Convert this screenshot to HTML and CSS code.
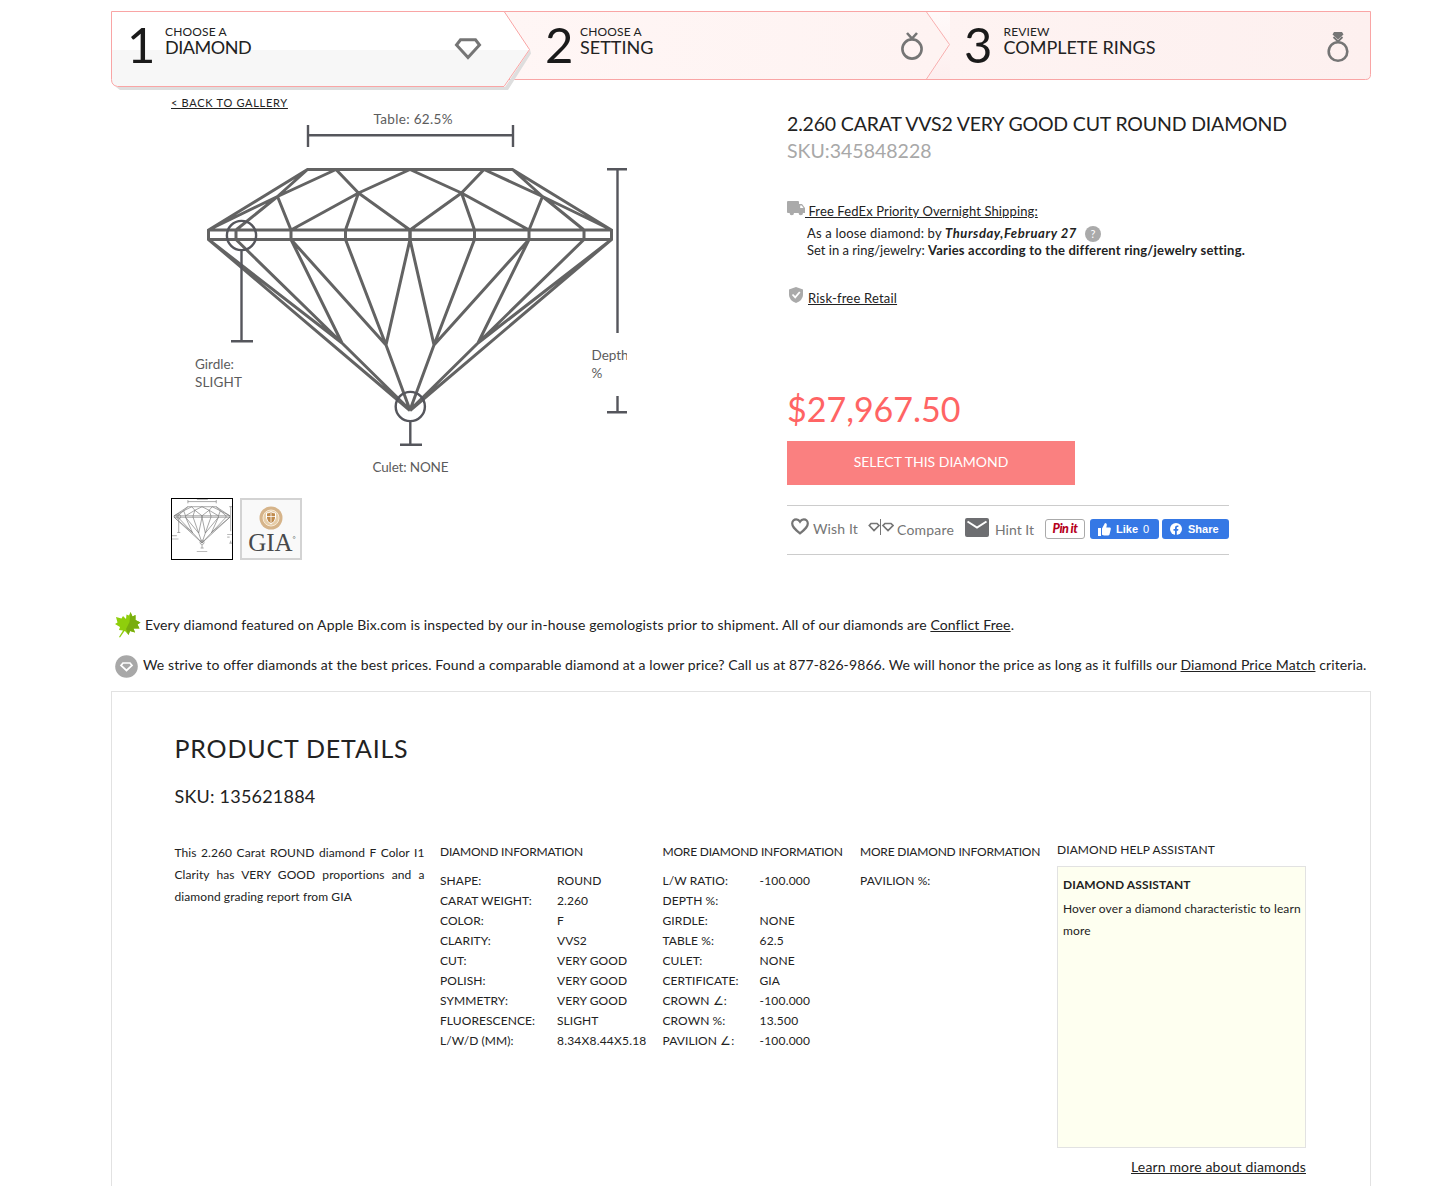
FILE: index.html
```html
<!DOCTYPE html>
<html lang="en">
<head>
<meta charset="utf-8">
<title>2.260 Carat VVS2 Very Good Cut Round Diamond</title>
<link rel="stylesheet" href="styles.css">
</head>
<body>
<div class="page">
  <nav class="steps">
    <svg class="steps-bg" viewBox="0 0 1260 80" width="1260" height="80">
      <defs>
        <linearGradient id="pinkA" x1="0" y1="0" x2="1" y2="0"><stop offset="0" stop-color="#fff6f5"/><stop offset="1" stop-color="#fdf0ef"/></linearGradient>
        <linearGradient id="pinkB" x1="0" y1="0" x2="0" y2="1"><stop offset="0" stop-color="#fffafa"/><stop offset="1" stop-color="#fdeeee"/></linearGradient>
      </defs>
      <path d="M393 .5H1259.500V63.500q0 5-5 5H393z" fill="url(#pinkA)" stroke="#f9a5a5"/>
      <path d="M815 1H839V68H815L838.500 33.500z" fill="url(#pinkB)"/>
      <path d="M815.500 1L838.500 33.500L815.500 68" fill="none" stroke="#f9b0b0"/>
      <path d="M5 76H394L419 38.500l1 4L397 79H9z" fill="#dedede"/>
      <path d="M.5 .5H393L418.500 38.500L393 75.500H6.500q-6-1-6-7z" fill="#fff"/>
      <path d="M1 39H418L393 75.500H6.500q-6-1-6-7z" fill="#f7f7f7"/>
      <path d="M393 .5H.5V68.500q0 6 6 7H393L418.500 38.500L393.500 1" fill="none" stroke="#f9a5a5"/>
    </svg>
    <a class="step step-1">
      <span class="step-num">1</span>
      <span class="step-label"><span class="step-verb">CHOOSE A</span><span class="step-name">DIAMOND</span></span>
      <svg class="step-icon" width="28" height="22" viewBox="0 0 28 22"><path d="M6.500 1.800h15l4 5.200L14 19.500L2.500 7z" fill="none" stroke="#757575" stroke-width="3"/></svg>
    </a>
    <a class="step step-2">
      <span class="step-num">2</span>
      <span class="step-label"><span class="step-verb">CHOOSE A</span><span class="step-name">SETTING</span></span>
      <svg class="step-icon" width="24" height="30" viewBox="0 0 24 30"><circle cx="12" cy="18" r="9.600" fill="none" stroke="#757575" stroke-width="2.600"/><path d="M7 2l5 5.500l5-5.500" fill="none" stroke="#757575" stroke-width="2.600"/></svg>
    </a>
    <a class="step step-3">
      <span class="step-num">3</span>
      <span class="step-label"><span class="step-verb">REVIEW</span><span class="step-name">COMPLETE RINGS</span></span>
      <svg class="step-icon" width="24" height="32" viewBox="0 0 24 32"><circle cx="12" cy="20.500" r="9.300" fill="none" stroke="#757575" stroke-width="2.600"/><path d="M8 1h8l1.500 2.500L12 8.500L6.500 3.500z" fill="#757575"/><path d="M7.500 6l4.500 4.500L16.500 6" fill="none" stroke="#757575" stroke-width="1.800"/></svg>
    </a>
  </nav>

  <main class="product">
    <section class="gallery">
      <a class="back">&lt; BACK TO GALLERY</a>
      <svg class="diagram" width="456" height="373" viewBox="171 112 456 373">
        <defs>
          <g id="halfDiamond">
            <path d="M410 169.500H307.500L208.500 230V239.500L410 410.500M410 230H208.500M410 239.500H208.500M307.500 169.500L277.500 196.500M336 169.500L277.500 196.500L208.500 230M277.500 196.500L236 230M277.500 196.500L291 230M336 169.500L358.500 193M410 169.500L358.500 193L291 230M358.500 193L345.500 230M358.500 193L410 230M236 230V239.500M291 230V239.500M345.500 230V239.500M410 230V239.500M208.500 239.500L342 343M236 239.500L342 343M291 239.500L342 343M291 239.500L386 345M345.500 239.500L386 345M410 239.500L386 345L410 410M342 343L410 410"/>
          </g>
          <g id="diamondArt">
            <use href="#halfDiamond"/>
            <use href="#halfDiamond" transform="translate(820 0) scale(-1 1)"/>
          </g>
          <g id="gauges">
            <circle cx="241.500" cy="235.500" r="14.600"/><circle cx="410.300" cy="406.500" r="14.600"/>
            <path d="M308 135.300H513M308 125V147M513 125V147M241.500 251V341M231 341.300H253M410.300 422V444M400 444.800H422M617.500 169V333M607 169.300H628M617.500 396V412M607 412.300H628"/>
          </g>
        </defs>
        <use href="#diamondArt" class="art"/>
        <use href="#gauges" class="gauge"/>
        <g class="diagram-text">
          <text x="373.500" y="124" textLength="79">Table: 62.5%</text>
          <text x="195" y="369" textLength="39">Girdle:</text>
          <text x="195" y="387" textLength="47">SLIGHT</text>
          <text x="591.500" y="360" textLength="37">Depth</text>
          <text x="591.500" y="378">%</text>
          <text x="372.500" y="472" textLength="76">Culet: NONE</text>
        </g>
      </svg>
      <div class="thumbs">
        <a class="thumb thumb-active"><svg width="60" height="60" viewBox="193 118 434 400" preserveAspectRatio="none"><use href="#diamondArt" class="art-small"/><use href="#gauges" class="gauge-small"/><path class="label-small" d="M373 121H452M178 362H228M178 385H240M592 355H627M592 372H610M372 468H448"/></svg></a>
        <a class="thumb thumb-gia">
          <svg width="24" height="24" viewBox="0 0 24 24"><circle cx="12" cy="12" r="11.500" fill="#d6b48a"/><circle cx="12" cy="12" r="8" fill="#e6cda8" stroke="#f8ead6"/><path d="M7.500 7q2.500 0 4.500-1.500Q14 7 16.500 7v5q0 3.500-4.500 6q-4.500-2.500-4.500-6z" fill="#c18c4e" stroke="#fff" /><path d="M12 6v11M8 10.500h8" stroke="#fff" stroke-width=".8"/></svg>
          <span class="gia">GIA<sup>°</sup></span>
        </a>
      </div>
    </section>

    <section class="info">
      <h1>2.260 CARAT VVS2 VERY GOOD CUT ROUND DIAMOND</h1>
      <div class="sku">SKU:345848228</div>
      <div class="perk shipping">
        <svg width="18" height="15" viewBox="0 0 18 15"><path d="M1 0h10q1 0 1 1v2h3l3 4v5h-2a2.200 2.200 0 0 1-4.400 0H7a2.200 2.200 0 0 1-4.400 0H1q-1 0-1-1V1q0-1 1-1z" fill="#aaa"/><path d="M13.200 4.500h1.600l1.700 2.500h-3.300z" fill="#fff"/></svg>
        <a>&nbsp;Free FedEx Priority Overnight Shipping:</a>
      </div>
      <div class="ship-lines">
        <div class="ship-line first"><span class="loose">As a loose diamond: by&nbsp;</span><b class="date">Thursday,February 27</b><span class="help">?</span></div>
        <div class="ship-line"><span>Set in a ring/jewelry:&nbsp;</span><b class="varies">Varies according to the different ring/jewelry setting.</b></div>
      </div>
      <div class="perk retail">
        <svg width="14" height="16" viewBox="0 0 14 16"><path d="M7 0l7 2.500V8q0 5-7 8Q0 13 0 8V2.500z" fill="#aaa"/><path d="M3.500 7.500l2.700 2.800L10.800 5" fill="none" stroke="#fff" stroke-width="1.800"/></svg>
        <a>Risk-free Retail</a>
      </div>
      <div class="price">$27,967.50</div>
      <a class="select">SELECT THIS DIAMOND</a>
      <div class="actions">
        <a class="action wish"><svg width="18" height="17" viewBox="0 0 18 17"><path d="M9 15.300C3 10.500 1.200 8.500 1.200 5.500C1.200 3 3 1.300 5.200 1.300C6.900 1.300 8.200 2.200 9 3.600C9.800 2.200 11.100 1.300 12.800 1.300C15 1.300 16.800 3 16.800 5.500C16.800 8.500 15 10.500 9 15.300z" fill="none" stroke="#757575" stroke-width="2.200"/></svg><span>Wish It</span></a>
        <a class="action compare"><svg width="26" height="16" viewBox="0 0 26 16"><path d="M3 4.500h6l2 2L6 11.500L1.300 6.500zM17 4.500h6l2 2L20 11.500L15 6.500z" fill="none" stroke="#757575" stroke-width="1.700"/><path d="M12.500 0V16" stroke="#757575"/></svg><span>Compare</span></a>
        <a class="action hint"><svg width="24" height="19" viewBox="0 0 24 19"><rect width="24" height="19" rx="2" fill="#6d6e71"/><path d="M2.500 3.500L12 9.500L21.500 3.500" fill="none" stroke="#fff" stroke-width="2"/></svg><span>Hint It</span></a>
        <a class="pin">Pin it</a>
        <a class="fb like"><svg width="13" height="13" viewBox="0 0 13 13"><path d="M0 5h3v8H0zM4 5.500L7 0q2.200 0 1.800 2.300L8.300 4.500H12q1.200 .6 .7 2L11.500 11.500q-.4 1-1.500 1H6L4 11.700z" fill="#fff"/></svg><b>Like</b><span>0</span></a>
        <a class="fb share"><svg width="12" height="12" viewBox="0 0 12 12"><circle cx="6" cy="6" r="6" fill="#fff"/><path d="M5 12V7.800H3.500V6H5V4.800Q5 2.500 7.200 2.500H8.400V4.100H7.500Q6.800 4.100 6.800 4.900V6h1.600L8.100 7.800H6.800V12z" fill="#3578e5"/></svg><b>Share</b></a>
      </div>
    </section>
  </main>

  <p class="notice leaf"><svg width="26" height="26" viewBox="0 0 26 26"><path d="M15.500 0L17.500 4.500L20.500 3L20.500 8L25.500 10.500L22.500 12.500L24.500 16.500L18.500 16.500L20 20.500L15 19L13.500 23L10.500 19.500L9.500 19L5 25.500L4 25L8 18.500L4 18L5 15L0 12L2.500 10.500L1 5L6.500 6.500L8 4L11 7L11.500 2.500L14 3.500z" fill="#8fce0c"/><path d="M15.500 0L17.500 4.500L20.500 3L20.500 8L25.500 10.500L22.500 12.500L24.500 16.500L18.500 16.500L20 20.500L15 19L13.500 23L11 17L14.500 10z" fill="#79ad0e"/></svg><span>Every diamond featured on Apple Bix.com is inspected by our in-house gemologists prior to shipment. All of our diamonds are <a>Conflict Free</a>.</span></p>
  <p class="notice match"><svg width="23" height="23" viewBox="0 0 23 23"><circle cx="11.500" cy="11.500" r="11.300" fill="#a8a8a8"/><path d="M8 8h7l2 2.500L11.500 15.500L6 10.500z" fill="none" stroke="#fff" stroke-width="1.700"/></svg><span>We strive to offer diamonds at the best prices. Found a comparable diamond at a lower price? Call us at 877-826-9866. We will honor the price as long as it fulfills our <a>Diamond Price Match</a> criteria.</span></p>

  <section class="details">
    <h2>PRODUCT DETAILS</h2>
    <h3>SKU: 135621884</h3>
    <div class="columns">
      <p class="blurb">This 2.260 Carat ROUND diamond F Color I1 Clarity has VERY GOOD proportions and a diamond grading report from GIA</p>
      <div class="spec spec-a">
        <h4>DIAMOND INFORMATION</h4>
        <dl>
          <dt>SHAPE:</dt><dd>ROUND</dd>
          <dt>CARAT WEIGHT:</dt><dd>2.260</dd>
          <dt>COLOR:</dt><dd>F</dd>
          <dt>CLARITY:</dt><dd>VVS2</dd>
          <dt>CUT:</dt><dd>VERY GOOD</dd>
          <dt>POLISH:</dt><dd>VERY GOOD</dd>
          <dt>SYMMETRY:</dt><dd>VERY GOOD</dd>
          <dt>FLUORESCENCE:</dt><dd>SLIGHT</dd>
          <dt>L/W/D (MM):</dt><dd class="num">8.34X8.44X5.18</dd>
        </dl>
      </div>
      <div class="spec spec-b">
        <h4>MORE DIAMOND INFORMATION</h4>
        <dl>
          <dt>L/W RATIO:</dt><dd class="num">-100.000</dd>
          <dt>DEPTH %:</dt><dd></dd>
          <dt>GIRDLE:</dt><dd>NONE</dd>
          <dt>TABLE %:</dt><dd class="num">62.5</dd>
          <dt>CULET:</dt><dd>NONE</dd>
          <dt>CERTIFICATE:</dt><dd>GIA</dd>
          <dt>CROWN ∠:</dt><dd class="num">-100.000</dd>
          <dt>CROWN %:</dt><dd class="num">13.500</dd>
          <dt>PAVILION ∠:</dt><dd class="num">-100.000</dd>
        </dl>
      </div>
      <div class="spec spec-c">
        <h4>MORE DIAMOND INFORMATION</h4>
        <dl><dt>PAVILION %:</dt><dd></dd></dl>
      </div>
      <aside class="assistant">
        <h4>DIAMOND HELP ASSISTANT</h4>
        <div class="assistant-box">
          <b>DIAMOND ASSISTANT</b>
          <p>Hover over a diamond characteristic to learn more</p>
        </div>
        <a class="learn">Learn more about diamonds</a>
      </aside>
    </div>
  </section>
</div>
</body>
</html>
```

FILE: styles.css
```css
* { box-sizing: border-box; }
body {
  margin: 0;
  font-family: Lato, "Liberation Sans", sans-serif;
  font-size: 14px;
  font-variant-ligatures: none;
  color: #222;
  background: #fff;
  overflow: hidden;
  height: 1186px;
}
h1, h2, h3, h4, p, dl, dd { margin: 0; font-weight: 400; }
svg { display: block; flex: none; }
.page { width: 1260px; margin-left: 111px; padding-top: 11px; }

/* progress steps */
.steps { position: relative; display: grid; grid-template-columns: 419px 420px 421px; height: 80px; }
.steps-bg { position: absolute; left: 0; top: 0; }
.step { position: relative; display: flex; height: 70px; align-items: flex-start; }
.step-1 { padding: 0 48px 0 16px; }
.step-2 { padding: 0 26px 0 15px; }
.step-3 { padding: 0 21px 0 14px; }
.step-num { font-size: 49px; line-height: 67px; width: 38px; color: #1a1a1a; }
.step-2 .step-num { width: 35px; }
.step-3 .step-num { width: 39.500px; }
.step-label { display: flex; flex-direction: column; padding-top: 14px; white-space: nowrap; }
.step-verb { font-size: 12px; line-height: 14px; letter-spacing: .15px; }
.step-name { font-size: 18px; line-height: 16px; }
.step-1 .step-name { letter-spacing: -.45px; }
.step-icon { margin-left: auto; }
.step-1 .step-icon { margin-top: 26.500px; }
.step-2 .step-icon { margin-top: 19.500px; }
.step-3 .step-icon { margin-top: 20px; }

/* product area */
.product { display: flex; padding-left: 60px; height: 513px; }
.gallery { width: 616px; padding-top: 4px; }
.back { display: block; font-size: 11px; line-height: 16px; text-decoration: underline; height: 17px; letter-spacing: .71px; }
.art { fill: none; stroke: #636363; stroke-width: 3; }
.gauge { fill: none; stroke: #55565c; stroke-width: 2.4; }
.art-small { fill: none; stroke: #777; stroke-width: 4.5; }
.gauge-small { fill: none; stroke: #888; stroke-width: 5; }
.label-small { stroke: #bbb; stroke-width: 7; }
.diagram-text { font-size: 13.5px; fill: #5c5c5c; }
.thumbs { display: flex; gap: 7px; margin-top: 13px; }
.thumb { width: 62px; height: 62px; border: 1px solid #000; }
.thumb-gia { display: flex; flex-direction: column; align-items: center; border: 2px solid #d3d3d3; background: #f9f9f9; padding-top: 6px; }
.gia { font-family: "Liberation Serif", serif; font-size: 25px; line-height: 26px; color: #48494b; padding-left: 2px; }
.gia sup { font-size: 8px; line-height: 0; }

.info { width: 500px; padding-top: 20px; white-space: nowrap; }
.info h1 { font-size: 19.500px; line-height: 26px; letter-spacing: -.17px; }
.sku { font-size: 19.500px; line-height: 27px; color: #a8a8a8; }
.perk { display: flex; font-size: 13px; line-height: 20px; letter-spacing: .12px; }
.perk a { text-decoration: underline; }
.shipping { margin-top: 37px; }
.ship-lines { padding-left: 20px; font-size: 13px; }
.ship-line { display: flex; line-height: 17px; }
.ship-line.first { padding-top: 4px; }
.loose { letter-spacing: .17px; }
.date { font-style: italic; letter-spacing: .58px; }
.varies { letter-spacing: .21px; }
.help { width: 16px; height: 16px; margin-left: 8px; border-radius: 8px; background: #aaa; color: #fff; font-size: 11px; line-height: 16px; text-align: center; margin-top: 1px; margin-bottom: -1px; }
.retail { margin-top: 29px; padding-left: 2px; gap: 5px; }
.retail svg { margin-top: -1px; }
.retail a { letter-spacing: .2px; }
.price { font-size: 34px; line-height: 44px; margin-top: 79px; color: #ff6464; }
.select { display: block; width: 288px; height: 44px; margin-top: 10px; background: #fa8080; color: #fff; text-align: center; line-height: 42px; font-size: 14px; }
.actions { display: flex; align-items: flex-start; width: 442px; height: 50px; margin-top: 20px; border-top: 1px solid #ccc; border-bottom: 1px solid #ccc; padding-top: 12px; }
.action { display: flex; color: #757575; font-size: 14px; line-height: 24px; }
.wish { padding-left: 4px; gap: 4px; width: 81px; line-height: 22px; letter-spacing: .14px; }
.compare { gap: 3px; width: 97px; letter-spacing: .19px; }
.compare svg { margin-top: 1px; }
.hint { gap: 6px; width: 80px; }
.pin { width: 40px; height: 20px; margin-top: 1px; border: 1px solid #aaa; border-radius: 3px; color: #b5001b; font-style: italic; font-weight: 900; font-size: 12.5px; line-height: 18px; text-align: center; letter-spacing: -.5px; margin-right: 5px; }
.fb { display: flex; align-items: center; height: 20px; margin-top: 1px; border-radius: 3px; background: #3578e5; color: #fff; font: 11px/20px "Liberation Sans", sans-serif; }
.like { width: 69px; padding-left: 8px; gap: 5px; margin-right: 3px; }
.share { width: 67px; padding-left: 8px; gap: 6px; }

.notice { display: flex; white-space: nowrap; font-size: 14px; line-height: 26px; letter-spacing: .108px; }
.notice a, .learn { text-decoration: underline; }
.leaf { padding-left: 4px; gap: 4px; margin-top: 8px; letter-spacing: .125px; line-height: 25px; }
.match { padding-left: 4px; gap: 5px; margin-top: 14px; }
.match svg { margin-top: 3px; }

/* details */
.details { margin-top: 13px; border: 1px solid #e2e2e2; height: 520px; padding: 39px 62.500px 0; }
.details h2 { font-size: 25px; line-height: 34px; letter-spacing: .81px; }
.details h3 { font-size: 18px; line-height: 24px; margin-top: 19px; letter-spacing: .21px; }
.columns { display: flex; margin-top: 34px; font-size: 12px; white-space: nowrap; letter-spacing: .08px; }
.blurb { width: 250px; margin-right: 15.500px; line-height: 22px; text-align: justify; white-space: normal; }
.spec h4, .assistant h4 { font-size: 12px; line-height: 20px; }
.spec h4 { letter-spacing: -.2px; }
.spec dl { display: grid; grid-auto-rows: 20px; line-height: 20px; margin-top: 9px; }
.num { letter-spacing: .2px; }
.spec-a { width: 222.500px; }
.spec-a dl { grid-template-columns: 117px 1fr; }
.spec-b { width: 197.500px; }
.spec-b dl { grid-template-columns: 97px 1fr; }
.spec-c { width: 197px; }
.spec-c dl { grid-template-columns: 97px 1fr; }
.assistant { width: 249px; margin-top: -2px; display: flex; flex-direction: column; }
.assistant-box { height: 282px; margin-top: 6px; border: 1px solid #e2e2e2; background: #fefff0; padding: 7px 5px; line-height: 22px; white-space: normal; letter-spacing: .11px; }
.assistant-box p { margin-top: 2px; margin-right: -4px; }
.learn { align-self: flex-end; font-size: 14px; line-height: 20px; margin-top: 9px; letter-spacing: .15px; }
```
